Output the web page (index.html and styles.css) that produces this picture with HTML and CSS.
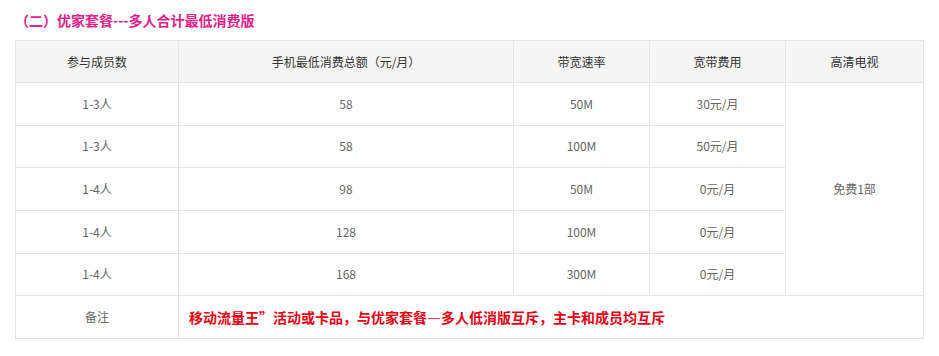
FILE: index.html
```html
<!DOCTYPE html>
<html lang="zh-CN">
<head>
<meta charset="utf-8">
<title>优家套餐</title>
<link rel="stylesheet" href="styles.css">
</head>
<body>
<div class="page">
  <h3 class="title">（二）优家套餐---多人合计最低消费版</h3>
  <table class="plan">
    <colgroup>
      <col class="c1"><col class="c2"><col class="c3"><col class="c4"><col class="c5">
    </colgroup>
    <thead>
      <tr class="head">
        <th>参与成员数</th>
        <th>手机最低消费总额（元/月）</th>
        <th>带宽速率</th>
        <th>宽带费用</th>
        <th>高清电视</th>
      </tr>
    </thead>
    <tbody>
      <tr><td>1-3人</td><td>58</td><td>50M</td><td>30元/月</td><td rowspan="5">免费1部</td></tr>
      <tr><td>1-3人</td><td>58</td><td>100M</td><td>50元/月</td></tr>
      <tr><td>1-4人</td><td>98</td><td>50M</td><td>0元/月</td></tr>
      <tr><td>1-4人</td><td>128</td><td>100M</td><td>0元/月</td></tr>
      <tr><td>1-4人</td><td>168</td><td>300M</td><td>0元/月</td></tr>
      <tr><td>备注</td><td colspan="4" class="note">移动流量王”活动或卡品，与优家套餐—多人低消版互斥，主卡和成员均互斥</td></tr>
    </tbody>
  </table>
</div>
</body>
</html>
```
FILE: styles.css
```css
html, body {
  margin: 0;
  padding: 0;
  background: #ffffff;
}
.page {
  padding: 10px 16px 0 15px;
  font-family: "Noto Sans CJK SC", "Microsoft YaHei", sans-serif;
}
.title {
  margin: 0 0 10px 0;
  font-size: 14px;
  line-height: 20px;
  font-weight: bold;
  color: #e0218a;
}
.plan {
  width: 908px;
  border-collapse: collapse;
  table-layout: fixed;
  font-size: 12px;
  color: #666666;
}
.c1 { width: 163px; }
.c2 { width: 335px; }
.c3 { width: 136px; }
.c4 { width: 136px; }
.c5 { width: 138px; }
.plan th, .plan td {
  border: 1px solid #e4e4e4;
  text-align: center;
  vertical-align: middle;
  padding: 0;
  line-height: 16px;
}
.plan th {
  background: #f5f5f5;
  color: #333333;
  font-weight: normal;
}
.plan .head { height: 42px; }
.plan tbody tr { height: 42.67px; }
.plan td.note {
  text-align: left;
  padding-left: 10px;
  font-size: 14px;
  font-weight: bold;
  color: #e60012;
}
```
